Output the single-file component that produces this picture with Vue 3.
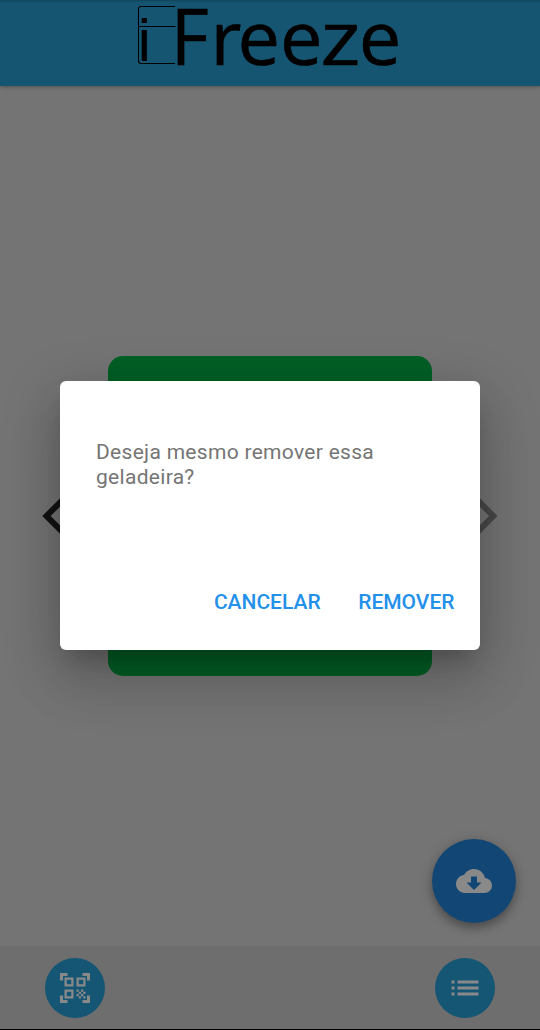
<script setup>
const icons = {
  scan: 'M9.5 6.5v3h-3v-3h3M11 5H5v6h6V5zm-1.5 9.5v3h-3v-3h3M11 13H5v6h6v-6zm6.5-6.5v3h-3v-3h3M19 5h-6v6h6V5zm-6 8h1.5v1.5H13V13zm1.5 1.5H16V16h-1.5v-1.5zM16 13h1.5v1.5H16V13zm-3 3h1.5v1.5H13V16zm1.5 1.5H16V19h-1.5v-1.5zM16 16h1.5v1.5H16V16zm1.5-1.5H19V16h-1.5v-1.5zm0 3H19V19h-1.5v-1.5zM22 7h-2V4h-3V2h5v5zm0 15v-5h-2v3h-3v2h5zM2 22h5v-2H4v-3H2v5zM2 2v5h2V4h3V2H2z',
  cloud: 'M19.35 10.04C18.67 6.59 15.64 4 12 4 9.11 4 6.6 5.64 5.35 8.04 2.34 8.36 0 10.91 0 14c0 3.31 2.69 6 6 6h13c2.76 0 5-2.24 5-5 0-2.64-2.05-4.78-4.65-4.96zM17 13l-5 5-5-5h3V9h4v4h3z',
  list: 'M3 13h2v-2H3v2zm0 4h2v-2H3v2zm0-8h2V7H3v2zm4 4h14v-2H7v2zm0 4h14v-2H7v2zM7 7v2h14V7H7z',
}
</script>

<template>
  <div class="screen">
    <header class="header">
      <svg class="logo" width="280" height="86" viewBox="130 0 280 86">
        <path class="fridge" d="M175 6.5H141Q138.500 6.500 138.500 9V60.500Q138.500 63.500 141 63.500H175M139 26.500H175.500" />
        <text class="letter-i" x="137.700" y="61" font-size="59">i</text>
        <text class="word" x="170.700" y="64.700" font-size="79.500" textLength="38" lengthAdjust="spacingAndGlyphs">F</text>
        <text class="word" x="210.400 237.600 280" y="64.700" font-size="75.700">ree</text>
        <text class="word" x="320.500" y="64.700" font-size="75.700" textLength="40" lengthAdjust="spacingAndGlyphs">z</text>
        <text class="word" x="358.700" y="64.700" font-size="75.700">e</text>
      </svg>
    </header>

    <main class="content">
      <div class="carousel">
        <svg class="arrow" width="24" height="40" viewBox="0 0 24 40"><path d="M26.500 0L6.500 20L26.500 40" /></svg>
        <div class="card"></div>
        <svg class="arrow dim" width="24" height="40" viewBox="0 0 24 40"><path d="M-2.700 0L17.300 20L-2.700 40" /></svg>
      </div>
      <button class="fab"><svg viewBox="0 0 24 24"><path :d="icons.cloud" /></svg></button>
    </main>

    <footer class="footer">
      <button class="round"><svg viewBox="0 0 24 24"><path :d="icons.scan" /></svg></button>
      <button class="round"><svg viewBox="0 0 24 24"><path :d="icons.list" /></svg></button>
    </footer>

    <section class="dialog" role="dialog">
      <p class="message">Deseja mesmo remover essa geladeira?</p>
      <div class="actions">
        <button class="action cancel">CANCELAR</button>
        <button class="action remove">REMOVER</button>
      </div>
    </section>
  </div>
</template>

<style>
body { margin: 0; }
</style>

<style scoped>
.screen {
  position: relative;
  display: flex;
  flex-direction: column;
  width: 540px;
  height: 1030px;
  overflow: hidden;
  box-sizing: border-box;
  border-bottom: 1px solid #000;
  background: #747474;
  font-family: Roboto, sans-serif;
}
button { border: 0; padding: 0; font-family: inherit; }
.header {
  height: 86px;
  flex: none;
  box-sizing: border-box;
  padding-left: 130px;
  background: linear-gradient(#10465c, #155571 3px);
  box-shadow: 0 1px 4px rgba(0, 0, 0, .3);
  z-index: 1;
}
.logo { display: block; overflow: visible; }
.fridge { fill: none; stroke: #000; stroke-width: 1.1; }
.letter-i { font-family: "Liberation Sans", sans-serif; }
.word { font-family: "Open Sans", sans-serif; font-weight: 400; stroke: #000; stroke-width: .6; }
.content {
  position: relative;
  flex: 1;
  display: flex;
  align-items: center;
  justify-content: center;
}
.carousel {
  display: flex;
  align-items: center;
  justify-content: space-between;
  width: 460px;
}
.card { width: 324px; height: 320px; border-radius: 15px; background: #005f25; }
.arrow path { fill: none; stroke: #131313; stroke-width: 6; }
.arrow.dim path { stroke: #484848; }
.fab {
  position: absolute;
  right: 24px;
  bottom: 23px;
  width: 84px;
  height: 84px;
  border-radius: 50%;
  display: grid;
  place-items: center;
  background: #124775;
  box-shadow: 0 5px 9px rgba(0, 0, 0, .28), 0 2px 16px rgba(0, 0, 0, .12);
}
.fab svg, .round svg { width: 36px; height: 36px; fill: #898989; }
.footer {
  flex: none;
  height: 83px;
  box-sizing: border-box;
  padding: 1px 45px 0;
  display: flex;
  align-items: center;
  justify-content: space-between;
  background: #6e6e6e;
}
.round {
  width: 60px;
  height: 60px;
  border-radius: 50%;
  display: grid;
  place-items: center;
  background: #155674;
}
.dialog {
  position: absolute;
  z-index: 2;
  left: 60px;
  top: 381px;
  width: 420px;
  height: 269px;
  box-sizing: border-box;
  padding: 59px 25.5px 24px 36px;
  display: flex;
  flex-direction: column;
  justify-content: space-between;
  border-radius: 6px;
  background: #fff;
  box-shadow: 0 16px 57px 4px rgba(0, 0, 0, .2), 0 36px 57px 4px rgba(0, 0, 0, .07), 0 16px 22px -10px rgba(0, 0, 0, .2);
}
.message {
  margin: 0;
  width: 300px;
  font-size: 21px;
  line-height: 25px;
  letter-spacing: .3px;
  color: #757575;
}
.actions { display: flex; justify-content: flex-end; gap: 37.5px; }
.action { height: 48px; background: none; color: #2390ea; font-size: 21px; font-weight: 500; }
</style>
